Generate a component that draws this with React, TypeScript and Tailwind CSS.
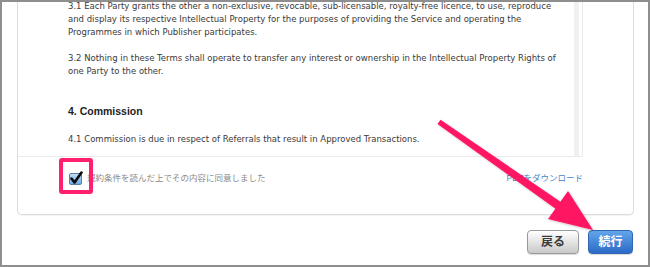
export default function App() {
  return (
    <div className="relative w-[650px] h-[267px] overflow-hidden border-2 border-[#8e8e8e] bg-white font-['Liberation_Sans','Noto_Sans_CJK_JP',sans-serif]">
      {/* card */}
      <div className="ml-[15px] w-[617px] h-[213px] border border-t-0 border-[#dcdcdc] rounded-b-[5px] shadow-[0_1px_1px_rgba(0,0,0,0.05)] flex flex-col">
        <div className="w-[565px] h-[155px] border-r border-b border-[#ebebeb] flex overflow-hidden">
          <div className="flex-1 pl-[50px] text-[8.5px] leading-[13px] text-[#3a3a3a] font-['DejaVu_Sans',sans-serif]">
            <div className="-mt-[2px] mb-[13px] whitespace-nowrap">
              <div>3.1 Each Party grants the other a non-exclusive, revocable, sub-licensable, royalty-free licence, to use, reproduce</div>
              <div>and display its respective Intellectual Property for the purposes of providing the Service and operating the</div>
              <div>Programmes in which Publisher participates.</div>
            </div>
            <div className="whitespace-nowrap">
              <div>3.2 Nothing in these Terms shall operate to transfer any interest or ownership in the Intellectual Property Rights of</div>
              <div>one Party to the other.</div>
            </div>
            <div className="mt-[25px] text-[10.5px] leading-[16px] font-bold text-[#1e1e1e] font-['Liberation_Sans',sans-serif]">4. Commission</div>
            <div className="mt-[14px] whitespace-nowrap">
              4.1 Commission is due in respect of Referrals that result in Approved Transactions.
            </div>
          </div>
          <div className="w-[5px] bg-[#f0f0f0] mr-[3px]" />
        </div>
        <div className="flex items-center pt-[15px] pl-[51px] pr-[50px]">
          <div className="relative w-[13px] h-[12px] rounded-[2px] border border-[#5b7fa6] bg-gradient-to-b from-[#c2dcf5] to-[#6fa8e3]">
            <svg className="absolute -left-[1px] -top-[3px]" width="15" height="14" viewBox="0 0 15 14">
              <path d="M2.5 7.5 L5.5 11.5 L12.5 1.5" fill="none" stroke="#0c0c0c" strokeWidth="2.6" strokeLinecap="round" strokeLinejoin="round" />
            </svg>
          </div>
          <span className="ml-[5px] text-[8.5px] leading-[13px] text-[#8a8a8a]">規約条件を読んだ上でその内容に同意しました</span>
          <span className="ml-auto text-[8.5px] leading-[13px] text-[#4a86c6]">PDFをダウンロード</span>
        </div>
      </div>

      {/* buttons */}
      <div className="mt-[15px] w-[631px] flex justify-end gap-[9px]">
        <button className="w-[52px] h-[24px] rounded-[4px] border border-[#9a9a9a] bg-gradient-to-b from-[#ffffff] to-[#c9c9c9] text-[12px] font-bold text-[#3a3a3a] shadow-[0_1px_1px_rgba(0,0,0,0.15)]">
          戻る
        </button>
        <button className="w-[45px] h-[24px] rounded-[4px] border border-[#2f67b3] bg-gradient-to-b from-[#63a5ea] to-[#2b6ac6] text-[12px] font-bold text-white shadow-[0_1px_1px_rgba(0,0,0,0.15)]">
          続行
        </button>
      </div>

      {/* highlight box over checkbox */}
      <div className="absolute left-[57px] top-[156px] w-[34px] h-[36px] rounded-[3px] border-[4px] border-[#ff1f6e]" />

      {/* arrow */}
      <svg className="absolute -left-[2px] -top-[2px] pointer-events-none" width="650" height="267" viewBox="0 0 650 267">
        <defs>
          <filter id="sh" x="-10%" y="-10%" width="120%" height="120%">
            <feDropShadow dx="1" dy="1" stdDeviation="1" floodColor="#000" floodOpacity="0.25" />
          </filter>
        </defs>
        <g fill="#ff1462" filter="url(#sh)">
          <polygon points="437.5,124 440.5,119.8 563,203.5 558,210.5" />
          <polygon points="593,230 548,219 568,191" />
        </g>
      </svg>
    </div>
  );
}
